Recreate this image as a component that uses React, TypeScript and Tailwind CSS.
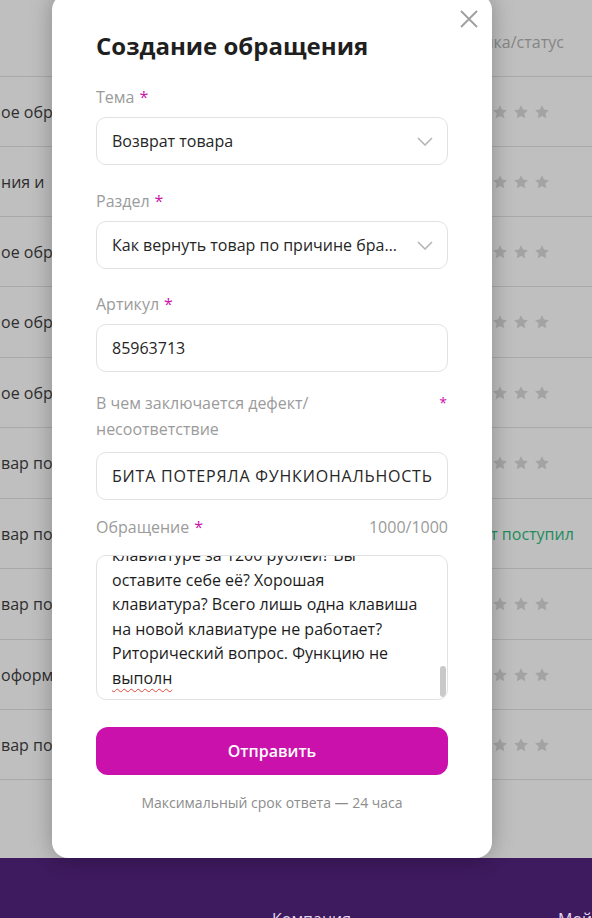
import React from "react";

const Star = () => (
  <svg width="16" height="16" viewBox="0 0 24 24" className="shrink-0">
    <path
      d="M12 1.8l3.1 6.6 7.2.9-5.3 5 1.4 7.1L12 17.9l-6.4 3.5 1.4-7.1-5.3-5 7.2-.9z"
      fill="#a3a3a3"
    />
  </svg>
);

const Stars = () => (
  <div className="flex gap-[5px]">
    <Star />
    <Star />
    <Star />
    <Star />
    <Star />
  </div>
);

const Chevron = () => (
  <svg width="16" height="9" viewBox="0 0 16 9" className="shrink-0">
    <path d="M1 1l7 7 7-7" fill="none" stroke="#b3b3b3" strokeWidth="1.5" />
  </svg>
);

type Row = { text: string; h: string; right: "stars" | "status" };

const rows: Row[] = [
  { text: "ое обра", h: "h-[70px]", right: "stars" },
  { text: "ния и", h: "h-[70px]", right: "stars" },
  { text: "ое обра", h: "h-[70px]", right: "stars" },
  { text: "ое обра", h: "h-[71px]", right: "stars" },
  { text: "ое обра", h: "h-[70px]", right: "stars" },
  { text: "вар по", h: "h-[71px]", right: "stars" },
  { text: "вар по", h: "h-[70px]", right: "status" },
  { text: "вар по", h: "h-[71px]", right: "stars" },
  { text: "оформ", h: "h-[70px]", right: "stars" },
  { text: "вар по", h: "h-[70px]", right: "stars" },
];

const Label = ({ children }: { children: React.ReactNode }) => (
  <div className="flex gap-[5px] text-[16px] leading-[24px] text-[#9b9b9b]">
    <span>{children}</span>
    <span className="text-[#cb11ab]">*</span>
  </div>
);

export default function App() {
  return (
    <div className="relative w-[592px] h-[918px] overflow-hidden bg-[#bfbfbf] font-['Open_Sans',sans-serif]">
      {/* background page */}
      <div className="flex flex-col h-full">
        <div className="flex-1 flex flex-col">
          <div className="h-[76px] flex items-center pt-[8px]">
            <div className="flex-1" />
            <div className="w-[142px] pl-[2px] text-[16px] text-[#858585] whitespace-nowrap">
              Оценка/статус
            </div>
          </div>
          {rows.map((r, i) => (
            <div
              key={i}
              className={`${r.h} flex items-center border-t border-[#a9a9a9]`}
            >
              <div className="flex-1 text-[16px] text-[#2e2e2e] whitespace-nowrap pl-[1px]">
                {r.text}
              </div>
              <div className="w-[142px]">
                {r.right === "stars" ? (
                  <Stars />
                ) : (
                  <div className="text-[16px] text-[#238b5d] whitespace-nowrap pl-[2px]">
                    Ответ поступил
                  </div>
                )}
              </div>
            </div>
          ))}
          <div className="flex-1 border-t border-[#a9a9a9]" />
        </div>
        <div className="h-[60px] bg-[#3e1a5e] grid grid-cols-[272px_286px_1fr] pt-[49px] text-[16px] text-[#e2d6f0] leading-[24px]">
          <div />
          <div>Компания</div>
          <div className="whitespace-nowrap">Мой профиль</div>
        </div>
      </div>

      {/* modal */}
      <div className="absolute left-[52px] top-[-6px] w-[440px] h-[864px] bg-white rounded-[16px] shadow-[0_0_22px_rgba(0,0,0,0.28)] flex flex-col px-[44px] pt-[36px]">
        <button className="absolute right-[14px] top-[16px] w-[18px] h-[18px]">
          <svg width="18" height="18" viewBox="0 0 18 18">
            <path d="M1 1l16 16M17 1L1 17" stroke="#9e9e9e" strokeWidth="1.8" />
          </svg>
        </button>

        <h2 className="text-[24px] leading-[32px] font-bold text-[#1f1f1f]">
          Создание обращения
        </h2>

        <div className="mt-[23px]">
          <Label>Тема</Label>
        </div>
        <div className="mt-[8px] h-[48px] rounded-[10px] border border-[#e2e2e2] flex items-center pl-[15px] pr-[14px]">
          <div className="flex-1 text-[16px] text-[#262626]">Возврат товара</div>
          <Chevron />
        </div>

        <div className="mt-[24px]">
          <Label>Раздел</Label>
        </div>
        <div className="mt-[8px] h-[48px] rounded-[10px] border border-[#e2e2e2] flex items-center pl-[15px] pr-[14px]">
          <div className="w-[290px] mr-[16px] truncate text-[16px] text-[#262626]">
            Как вернуть товар по причине брака
          </div>
          <div className="flex-1" />
          <Chevron />
        </div>

        <div className="mt-[23px]">
          <Label>Артикул</Label>
        </div>
        <div className="mt-[8px] h-[48px] rounded-[10px] border border-[#e2e2e2] flex items-center pl-[15px] pr-[14px]">
          <div className="text-[16px] text-[#262626]">85963713</div>
        </div>

        <div className="mt-[18px] flex justify-between text-[16px] leading-[26px] text-[#9b9b9b]">
          <div>
            В чем заключается дефект/
            <br />
            несоответствие
          </div>
          <span className="text-[#cb11ab] text-[14px] leading-[26px] pr-[1px]">*</span>
        </div>
        <div className="mt-[10px] h-[48px] rounded-[10px] border border-[#e2e2e2] flex items-center pl-[15px] pr-[14px] overflow-hidden">
          <div className="text-[16px] tracking-[0.8px] text-[#262626] whitespace-nowrap overflow-hidden">
            БИТА ПОТЕРЯЛА ФУНКИОНАЛЬНОСТЬ
          </div>
        </div>

        <div className="mt-[15px] flex justify-between text-[16px] leading-[24px] text-[#9b9b9b]">
          <div className="flex gap-[5px]">
            <span>Обращение</span>
            <span className="text-[#cb11ab]">*</span>
          </div>
          <div>1000/1000</div>
        </div>
        <div className="relative mt-[16px] h-[145px] rounded-[10px] border border-[#e2e2e2] overflow-hidden pl-[15px] pr-[14px]">
          <div className="mt-[-13px] text-[16px] leading-[24.5px] text-[#1c1c1c] whitespace-nowrap">
            <div>клавиатуре за 1200 рублей? Вы</div>
            <div>оставите себе её? Хорошая</div>
            <div>клавиатура? Всего лишь одна клавиша</div>
            <div>на новой клавиатуре не работает?</div>
            <div>Риторический вопрос. Функцию не</div>
            <div>
              <span className="underline decoration-wavy decoration-[#e0453a] decoration-1 underline-offset-[4px]">
                выполн
              </span>
            </div>
          </div>
          <div className="absolute right-[1px] bottom-[2px] w-[6px] h-[31px] rounded-full bg-[#c9c9c9]" />
        </div>

        <button className="mt-[27px] h-[48px] rounded-[12px] bg-[#cb11ab] text-white text-[16px] font-semibold">
          Отправить
        </button>

        <div className="mt-[18px] text-center text-[14px] leading-[20px] text-[#8c8c8c]">
          Максимальный срок ответа — 24 часа
        </div>
      </div>
    </div>
  );
}
